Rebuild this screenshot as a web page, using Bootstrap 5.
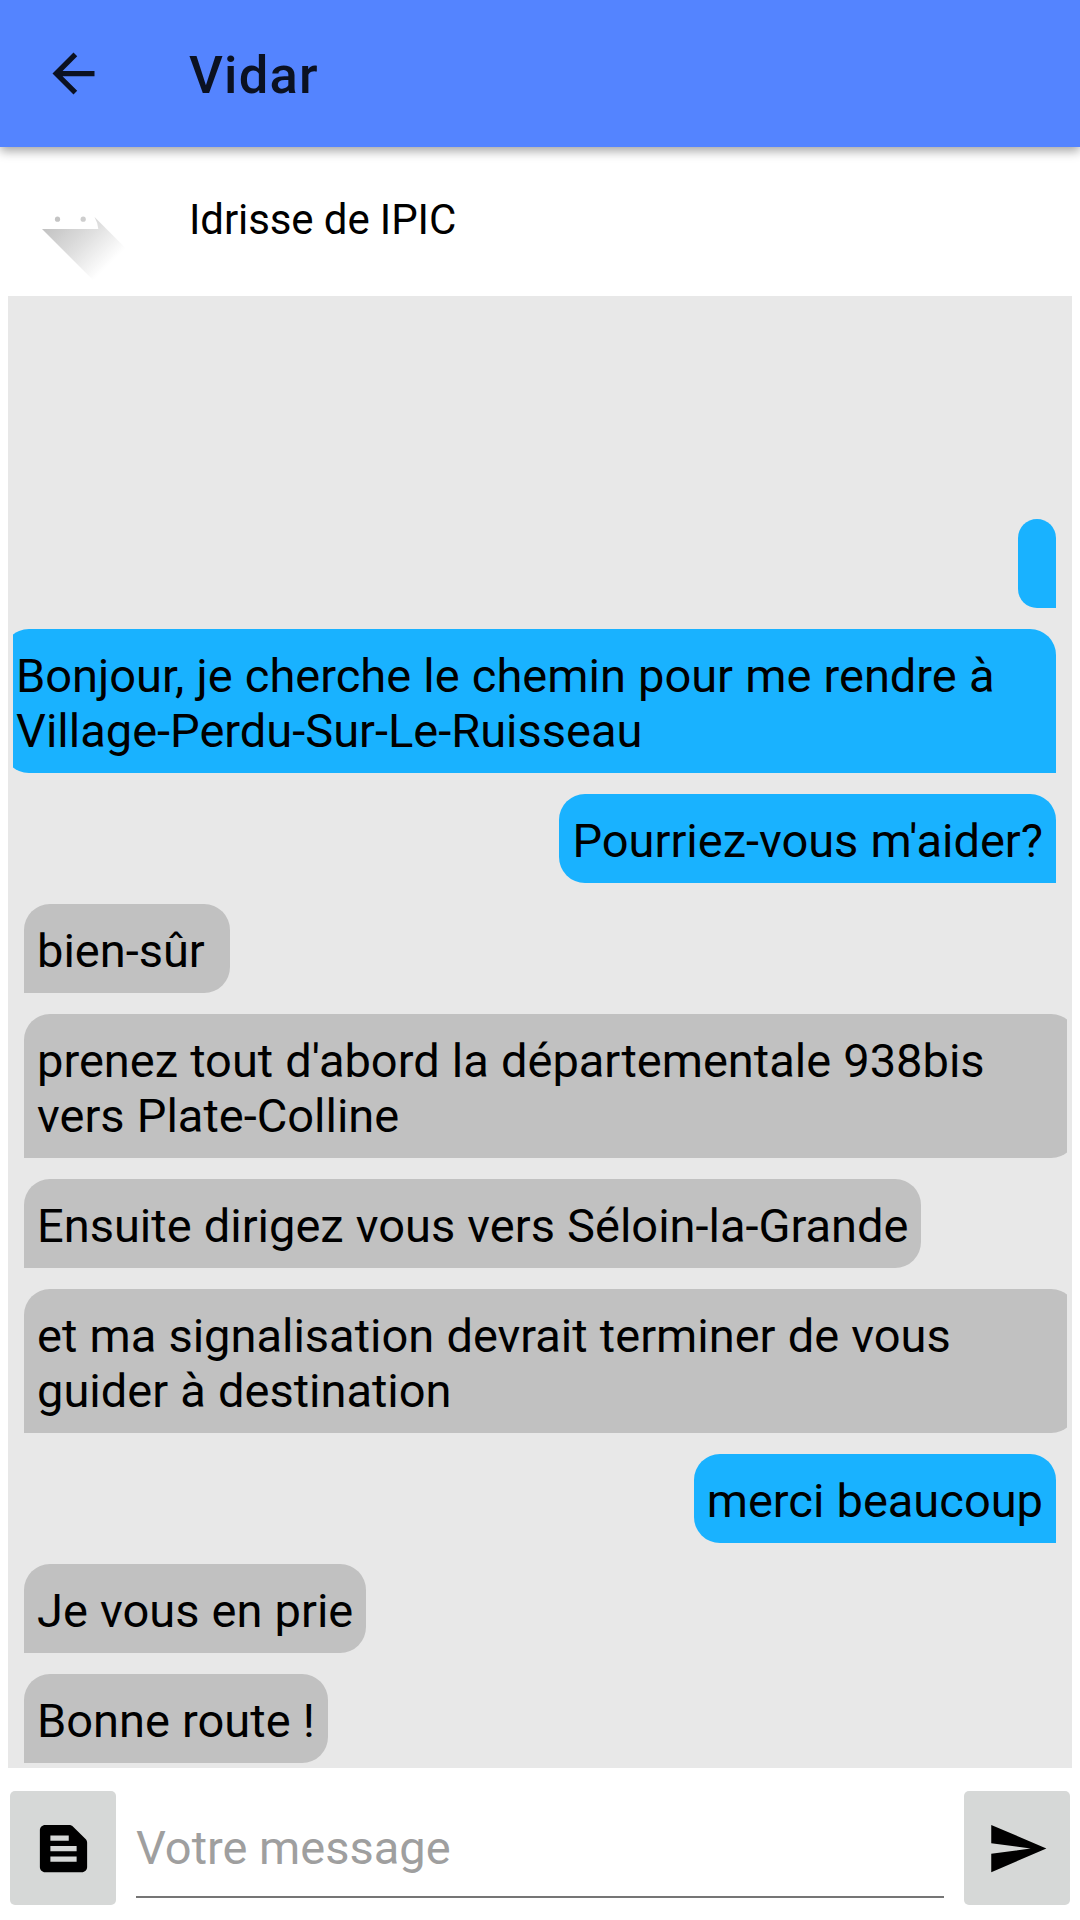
<!DOCTYPE html>
<html lang="fr">
<head>
<meta charset="utf-8">
<meta name="viewport" content="width=device-width, initial-scale=1">
<title>Vidar</title>
<link href="https://cdn.jsdelivr.net/npm/bootstrap@5.3.0/dist/css/bootstrap.min.css" rel="stylesheet">
<style>
  body { font-family: Roboto, "Liberation Sans", sans-serif; color: #000; line-height: 55px; }
  .screen { height: 1920px; width: 1080px; }
  .topbar { height: 147px; background: #5484ff; color: #0b1121; padding: 0 42px; gap: 84px; box-shadow: 0 4px 10px rgba(0,0,0,.36); z-index: 1; }
  .topbar h1 { font-size: 52.5px; font-weight: 500; line-height: 62px; padding-top: 3px; letter-spacing: 1.2px; }
  .contact { height: 149px; padding-left: 37px; gap: 57px; }
  .contact-name { font-size: 42px; line-height: 50px; padding-top: 48px; letter-spacing: -.1px; }
  .avatar { width: 95px; height: 95px; margin-top: 42px; }
  .thread { margin: 0 8px; height: 1472px; background: #e8e8e8; padding: 5px; }
  .thread-clip { overflow: hidden; gap: 21px; padding: 0 11px; }
  .bubble { font-size: 47px; padding: 19px 13px 15px; white-space: nowrap; min-height: 89px; min-width: 38px; word-spacing: .5px; }
  .sent { background: #19b2ff; border-radius: 26px 26px 0 26px; }
  .received { background: #c1c1c1; border-radius: 26px 26px 26px 0; }
  .bubble-full { width: 1053px; }
  .composer { padding: 23px 10px 15px; gap: 20px; }
  .tool { width: 106px; height: 114px; background: #d6d8d7; border-radius: 5px; }
  .message-box { height: 107px; border-bottom: 2px solid #757575; font-size: 47px; }
  .message-box::placeholder { color: #9f9f9f; opacity: 1; }
</style>
</head>
<body class="bg-white">
<div class="screen d-flex flex-column overflow-hidden">
  <header class="topbar d-flex align-items-center flex-shrink-0 position-relative">
    <svg width="63" height="63" viewBox="0 0 24 24" fill="currentColor" role="img" aria-label="Retour"><path d="M20 11H7.83l5.59-5.59L12 4l-8 8 8 8 1.41-1.41L7.83 13H20z"/></svg>
    <h1 class="mb-0">Vidar</h1>
  </header>

  <section class="contact d-flex align-items-start flex-shrink-0">
    <svg class="avatar" viewBox="37 189 95 95" aria-hidden="true">
      <defs><linearGradient id="fade" gradientUnits="userSpaceOnUse" x1="58" y1="214" x2="109" y2="265"><stop offset="0" stop-color="#c2c2c2"/><stop offset=".5" stop-color="#dedede"/><stop offset="1" stop-color="#fff"/></linearGradient></defs>
      <path fill="url(#fade)" d="M42 229H98.3Q98 223 94.5 217L126 248.5 93 280Z"/>
      <circle cx="57.5" cy="219.2" r="2.6" fill="#c4c4c4"/><circle cx="83.2" cy="219.2" r="2.6" fill="#cecece"/>
    </svg>
    <div class="contact-name">Idrisse de IPIC</div>
  </section>

  <main class="thread d-flex flex-shrink-0">
    <div class="thread-clip d-flex flex-column justify-content-end flex-fill">
      <div class="bubble sent align-self-end"></div>
      <div class="bubble sent bubble-full align-self-end">Bonjour, je cherche le chemin pour me rendre à<br>Village-Perdu-Sur-Le-Ruisseau</div>
      <div class="bubble sent align-self-end">Pourriez-vous m'aider?</div>
      <div class="bubble received align-self-start">bien-sûr&nbsp;</div>
      <div class="bubble received bubble-full align-self-start">prenez tout d'abord la départementale 938bis<br>vers Plate-Colline</div>
      <div class="bubble received align-self-start">Ensuite dirigez vous vers Séloin-la-Grande</div>
      <div class="bubble received bubble-full align-self-start">et ma signalisation devrait terminer de vous<br>guider à destination</div>
      <div class="bubble sent align-self-end">merci beaucoup</div>
      <div class="bubble received align-self-start">Je vous en prie</div>
      <div class="bubble received align-self-start">Bonne route !</div>
    </div>
  </main>

  <footer class="composer d-flex align-items-start">
    <button class="tool btn border-0 p-0 d-flex align-items-center justify-content-center flex-shrink-0" type="button" aria-label="Modèles">
      <svg width="63" height="63" viewBox="0 0 24 24"><path fill="#000" fill-rule="evenodd" d="M20.41 8.41l-4.83-4.83C15.21 3.21 14.7 3 14.17 3H5c-1.1 0-2 .9-2 2v14c0 1.1.9 2 2 2h14c1.1 0 2-.9 2-2V9.83c0-.53-.21-1.04-.59-1.42zM7 7h7v2H7V7zm10 10H7v-2h10v2zm0-4H7v-2h10v2z"/></svg>
    </button>
    <input class="message-box flex-fill border-top-0 border-start-0 border-end-0 rounded-0 px-0 pb-0 pt-2 bg-transparent" type="text" placeholder="Votre message" aria-label="Votre message">
    <button class="tool btn border-0 p-0 d-flex align-items-center justify-content-center flex-shrink-0" type="button" aria-label="Envoyer">
      <svg width="63" height="63" viewBox="0 0 24 24"><path fill="#000" d="M2 3l0 7 15 2-15 2v7l21-9z"/></svg>
    </button>
  </footer>
</div>
<script src="https://cdn.jsdelivr.net/npm/bootstrap@5.3.0/dist/js/bootstrap.bundle.min.js"></script>
</body>
</html>
